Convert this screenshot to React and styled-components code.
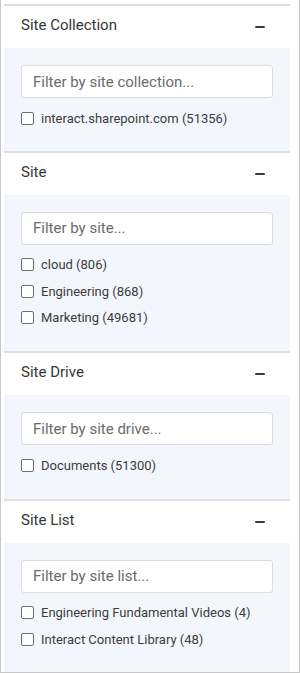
import React, { useState } from 'react';
import styled, { createGlobalStyle } from 'styled-components';

const GlobalStyle = createGlobalStyle`
  html, body {
    margin: 0;
    padding: 0;
    background: #ffffff;
  }
  * {
    box-sizing: border-box;
  }
`;

// Outer frame of the filter panel
const Panel = styled.div`
  width: 300px;
  height: 673px;
  padding: 4px 9px 0 3px;
  border-left: 1px solid #c8c8c8;
  border-right: 1px solid #c8c8c8;
  border-bottom: 1px solid #c8c8c8;
  background: #ffffff;
  font-family: Roboto, "Liberation Sans", Arial, sans-serif;
  overflow: hidden;
  display: flex;
  flex-direction: column;
`;

const Section = styled.section`
  border-top: 2px solid #dedede;
  display: flex;
  flex-direction: column;
`;

const SectionHeader = styled.div`
  height: 42px;
  padding: 0 25px 0 17px;
  display: flex;
  align-items: center;
  justify-content: space-between;
  background: #ffffff;
  cursor: pointer;
`;

const SectionTitle = styled.h3`
  margin: 0 0 4px;
  font-size: 15px;
  font-weight: 400;
  color: #363636;
`;

const Collapse = styled.span`
  width: 10px;
  height: 2px;
  background: #3a3a3a;
  border-radius: 1px;
`;

const SectionBody = styled.div`
  background: #f3f6fd;
  padding: 17px 17px ${p => p.$bottom}px;
  display: flex;
  flex-direction: column;
`;

const FilterInput = styled.input`
  width: 100%;
  height: 33px;
  padding: 0 11px;
  border: 1px solid #dcdcdc;
  border-radius: 3px;
  background: #ffffff;
  font-family: inherit;
  font-size: 15px;
  color: #333333;
  outline: none;

  &::placeholder {
    color: #6b6b6b;
  }
`;

const OptionList = styled.ul`
  list-style: none;
  margin: 7px 0 0;
  padding: 0;
`;

const OptionRow = styled.li`
  height: 26.5px;
  display: flex;
  align-items: center;
  gap: 7px;
  font-size: 13px;
  color: #3c3c3c;
`;

const Box = styled.span`
  width: 13px;
  height: 13px;
  border: 1px solid #6e6e6e;
  border-radius: 2px;
  background: #ffffff;
  flex-shrink: 0;
`;

const sections = [
  {
    title: 'Site Collection',
    placeholder: 'Filter by site collection...',
    options: ['interact.sharepoint.com (51356)'],
    bottom: 19
  },
  {
    title: 'Site',
    placeholder: 'Filter by site...',
    options: ['cloud (806)', 'Engineering (868)', 'Marketing (49681)'],
    bottom: 20
  },
  {
    title: 'Site Drive',
    placeholder: 'Filter by site drive...',
    options: ['Documents (51300)'],
    bottom: 20
  },
  {
    title: 'Site List',
    placeholder: 'Filter by site list...',
    options: ['Engineering Fundamental Videos (4)', 'Interact Content Library (48)'],
    bottom: 30
  }
];

const FilterSection = ({ title, placeholder, options, bottom }) => {
  const [open, setOpen] = useState(true);
  return (
    <Section>
      <SectionHeader onClick={() => setOpen(!open)}>
        <SectionTitle>{title}</SectionTitle>
        <Collapse />
      </SectionHeader>
      {open && (
        <SectionBody $bottom={bottom}>
          <FilterInput placeholder={placeholder} />
          <OptionList>
            {options.map(label => (
              <OptionRow key={label}>
                <Box />
                {label}
              </OptionRow>
            ))}
          </OptionList>
        </SectionBody>
      )}
    </Section>
  );
};

const App = () => (
  <>
    <GlobalStyle />
    <Panel>
      {sections.map(s => (
        <FilterSection key={s.title} {...s} />
      ))}
    </Panel>
  </>
);

export default App;
